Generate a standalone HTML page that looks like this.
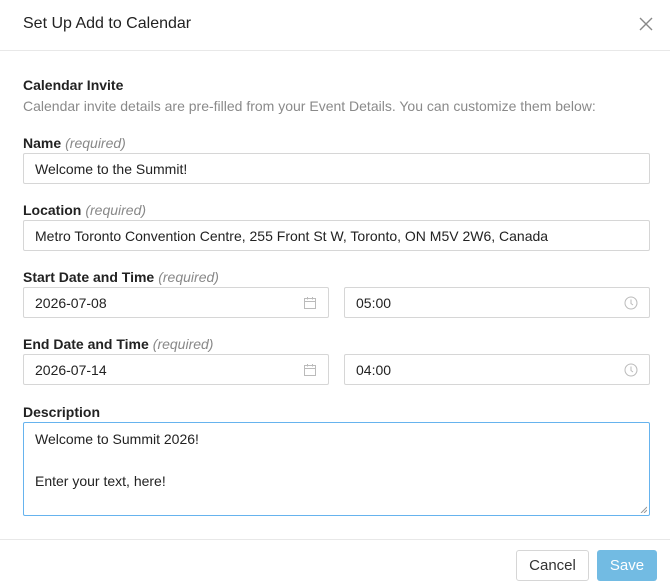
<!DOCTYPE html>
<html><head><style>
*{box-sizing:border-box;margin:0;padding:0}
body{width:670px;height:588px;background:#fff;font-family:"Liberation Sans",sans-serif;color:#222;position:relative;overflow:hidden}
.a{position:absolute}
.title{left:23px;top:15px;font-size:16px;color:#222}
.hr{left:0;width:670px;height:1px;background:#e8e8e8}
.lbl{left:23px;font-size:14px;font-weight:bold;color:#222}
.lbl i{font-weight:normal;color:#888;margin-left:4px}
.inp{border:1px solid #d6d6d6;border-radius:2px;height:31px;font-size:14px;padding:0 11px;line-height:30px;color:#222}
.ico{position:absolute;right:11px;top:8px}
</style></head><body>
<div class="a title">Set Up Add to Calendar</div>
<svg class="a" style="left:639px;top:17px" width="14" height="14" viewBox="0 0 14 14"><path d="M1 1L13 13M13 1L1 13" stroke="#888" stroke-width="1.4"/></svg>
<div class="a hr" style="top:50px"></div>
<div class="a lbl" style="top:77px">Calendar Invite</div>
<div class="a" style="left:23px;top:98px;font-size:14px;color:#8a8a8a">Calendar invite details are pre-filled from your Event Details. You can customize them below:</div>
<div class="a lbl" style="top:135px">Name<i>(required)</i></div>
<div class="a inp" style="left:23px;top:153px;width:627px">Welcome to the Summit!</div>
<div class="a lbl" style="top:202px">Location<i>(required)</i></div>
<div class="a inp" style="left:23px;top:220px;width:627px">Metro Toronto Convention Centre, 255 Front St W, Toronto, ON M5V 2W6, Canada</div>
<div class="a lbl" style="top:269px">Start Date and Time<i>(required)</i></div>
<div class="a inp" style="left:23px;top:287px;width:306px">2026-07-08<svg class="ico" width="14" height="14" viewBox="0 0 14 14"><rect x="1.5" y="2.5" width="11" height="10" fill="none" stroke="#bbb"/><path d="M1.5 5.5H12.5M4.5 1V3.5M9.5 1V3.5" stroke="#bbb"/></svg></div>
<div class="a inp" style="left:344px;top:287px;width:306px">05:00<svg class="ico" width="14" height="14" viewBox="0 0 14 14"><circle cx="7" cy="7" r="6" fill="none" stroke="#bbb"/><path d="M7 3.5V7.5L9 9" fill="none" stroke="#bbb"/></svg></div>
<div class="a lbl" style="top:336px">End Date and Time<i>(required)</i></div>
<div class="a inp" style="left:23px;top:354px;width:306px">2026-07-14<svg class="ico" width="14" height="14" viewBox="0 0 14 14"><rect x="1.5" y="2.5" width="11" height="10" fill="none" stroke="#bbb"/><path d="M1.5 5.5H12.5M4.5 1V3.5M9.5 1V3.5" stroke="#bbb"/></svg></div>
<div class="a inp" style="left:344px;top:354px;width:306px">04:00<svg class="ico" width="14" height="14" viewBox="0 0 14 14"><circle cx="7" cy="7" r="6" fill="none" stroke="#bbb"/><path d="M7 3.5V7.5L9 9" fill="none" stroke="#bbb"/></svg></div>
<div class="a lbl" style="top:404px">Description</div>
<div class="a" style="left:23px;top:422px;width:627px;height:94px;border:1px solid #66b3ee;border-radius:2px;font-size:14px;padding:6px 11px;line-height:21px">Welcome to Summit 2026!<br><br>Enter your text, here!
<svg style="position:absolute;right:2px;bottom:2px" width="7" height="7"><path d="M7 1L1 7M7 4L4 7" stroke="#999"/></svg></div>
<div class="a hr" style="top:539px"></div>
<div class="a" style="left:516px;top:550px;width:73px;height:31px;border:1px solid #d6d6d6;border-radius:3px;text-align:center;line-height:29px;font-size:15px;color:#333">Cancel</div>
<div class="a" style="left:597px;top:550px;width:60px;height:31px;background:#72bbe3;border-radius:3px;text-align:center;line-height:31px;font-size:15px;color:#fff">Save</div>
</body></html>
